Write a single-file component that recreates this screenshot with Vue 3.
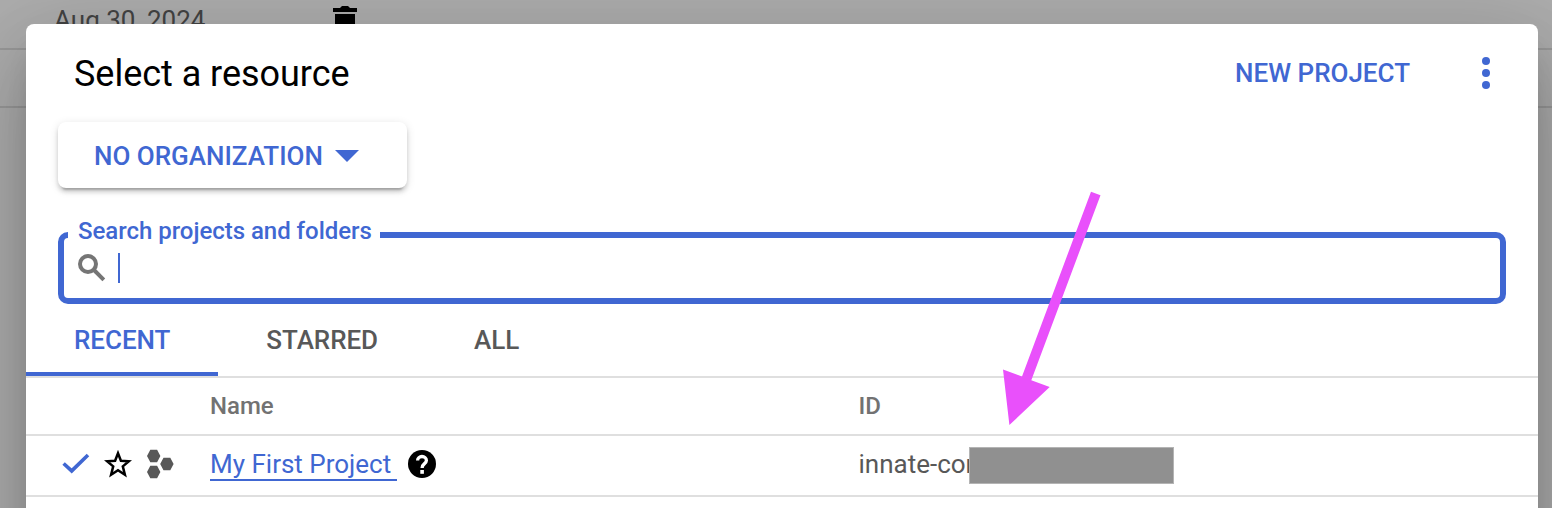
<script setup>
const tabs = [
  { label: 'RECENT', active: true },
  { label: 'STARRED', active: false },
  { label: 'ALL', active: false },
]
</script>

<template>
  <div class="page">
    <div class="backdrop">
      <div class="back-row first">
        <span class="date">Aug 30, 2024</span>
        <svg class="trash" width="24" height="36" viewBox="0 0 24 36">
          <path d="M9 0h6l2 2h7v4H0V2h7zM2 8h20v22a4 4 0 0 1-4 4H6a4 4 0 0 1-4-4z" />
        </svg>
      </div>
      <div class="back-row second"></div>
    </div>

    <section class="dialog">
      <header class="head">
        <h1>Select a resource</h1>
        <button class="new">NEW PROJECT</button>
        <svg class="dots" width="8" height="32" viewBox="0 0 8 32">
          <circle cx="4" cy="4" r="4" /><circle cx="4" cy="16" r="4" /><circle cx="4" cy="28" r="4" />
        </svg>
      </header>

      <button class="org">
        <span>NO ORGANIZATION</span>
        <svg width="24" height="12" viewBox="0 0 24 12"><path d="M0 0h24L12 12z" /></svg>
      </button>

      <div class="search">
        <label>Search projects and folders</label>
        <svg width="28" height="28" viewBox="0 0 28 28">
          <circle cx="10" cy="10" r="8" /><path d="M15.500 15.500L25.800 25.800" />
        </svg>
        <i class="caret"></i>
      </div>

      <nav class="tabs">
        <a v-for="t in tabs" :key="t.label" :class="['tab', { active: t.active }]">{{ t.label }}</a>
      </nav>

      <div class="row thead">
        <span class="name">Name</span>
        <span class="id">ID</span>
      </div>
      <div class="row item">
        <div class="icons">
          <svg class="check" width="28" height="22" viewBox="0 0 28 22"><path d="M1.600 10.500L9.700 17.900L26 2" /></svg>
          <svg class="star" width="28" height="28" viewBox="0 0 28 28">
            <path d="M14 3.200L16.900 10.700L25 11.200L18.800 16.400L20.900 24.800L14 20.300L7.100 24.800L9.200 16.400L3 11.200L11.100 10.700Z" />
          </svg>
          <svg class="hex" width="28" height="30" viewBox="0 0 28 30">
            <path d="M3.300.8h6.800l3.300 6.200-3.300 6.200H3.300L0 7zM16.500 8.800h6.800l3.300 6.200-3.300 6.200h-6.800l-3.300-6.200zM3.300 16.800h6.800l3.300 6.200-3.300 6.200H3.300L0 23z" />
          </svg>
        </div>
        <div class="name">
          <a class="link">My First Project</a>
          <svg class="help" width="28" height="28" viewBox="0 0 28 28">
            <circle cx="14" cy="14" r="14" />
            <path d="M9.600 10.500a4.400 4 0 0 1 8.800 0c0 3.300-4.300 3-4.300 7.400" />
            <rect x="12.300" y="20" width="3.600" height="3.800" />
          </svg>
        </div>
        <div class="id">innate-cor<i class="mask"></i></div>
      </div>
    </section>

    <svg class="arrow" width="60" height="240" viewBox="0 0 60 240">
      <path d="M91 1.700L100.500 5.200L31.300 190.300L49.700 197L9.400 235L3 179.500L22 186.500Z" />
    </svg>
  </div>
</template>

<style>
body { margin: 0; overflow: hidden; }
</style>

<style scoped>
* { box-sizing: border-box; }
.page {
  position: relative;
  height: 508px;
  overflow: hidden;
  padding: 24px 14px 0 26px;
  background: #adadad;
  font-family: Roboto, "Liberation Sans", sans-serif;
}
.backdrop { position: absolute; inset: 0; }
.back-row { border-bottom: 2px solid #999; }
.first { display: flex; height: 50px; padding-left: 54px; }
.second { height: 58px; }
.date { width: 279px; margin-top: 4px; font-size: 26px; line-height: 32px; color: #434343; }
.trash { margin-top: 6px; }
.dialog {
  position: relative;
  display: flex;
  flex-direction: column;
  width: 1512px;
  height: 640px;
  border-radius: 8px;
  background: #fff;
  box-shadow: 0 22px 30px -14px rgba(0, 0, 0, .2), 0 48px 76px 6px rgba(0, 0, 0, .14), 0 18px 92px 16px rgba(0, 0, 0, .12);
}
.head { display: flex; align-items: center; height: 98px; padding: 0 48px; }
h1 { margin: 0 auto 0 0; padding-top: 2px; font-size: 36px; line-height: 48px; font-weight: 400; letter-spacing: -.03px; color: #000; }
button { border: 0; padding: 0; background: none; font: 500 26px/32px Roboto, sans-serif; color: #4067d2; }
svg { flex: none; display: block; }
.dots { margin-left: 72px; fill: #4067d2; }
.org {
  display: flex;
  align-items: center;
  gap: 12px;
  width: 349px;
  height: 66px;
  margin-left: 32px;
  padding: 2px 0 0 36px;
  border-radius: 8px;
  background: #fff;
  box-shadow: 0 6px 2px -4px rgba(0, 0, 0, .2), 0 4px 4px rgba(0, 0, 0, .14), 0 2px 10px rgba(0, 0, 0, .12);
}
.org svg { fill: #4067d2; }
.search {
  position: relative;
  display: flex;
  align-items: center;
  height: 72px;
  margin: 44px 32px 0;
  padding-left: 14px;
  border: 6px solid #4067d2;
  border-radius: 10px;
}
.search svg { fill: none; stroke: #757575; stroke-width: 4; }
.search label {
  position: absolute;
  left: 4px;
  top: -23px;
  width: 312px;
  padding-left: 10px;
  background: #fff;
  font-size: 24px;
  line-height: 32px;
  font-weight: 500;
  letter-spacing: -.03px;
  color: #4067d2;
  white-space: nowrap;
}
.caret { width: 2px; height: 30px; margin-left: 12px; background: #4067d2; }
.tabs { display: flex; height: 74px; border-bottom: 2px solid #dfdfdf; }
.tab { height: 72px; padding: 0 48px; font-size: 26px; font-weight: 500; line-height: 72px; letter-spacing: -.05px; color: #585858; }
.active { color: #4067d2; border-bottom: 4px solid #4067d2; }
.row { display: flex; align-items: center; border-bottom: 2px solid #dfdfdf; }
.thead { height: 58px; padding-left: 184px; font-size: 24px; font-weight: 500; color: #727272; }
.item { height: 61px; padding-bottom: 3px; font-size: 26px; color: #585858; }
.icons { display: flex; align-items: center; width: 184px; padding-left: 36px; }
.check { fill: none; stroke: #4067d2; stroke-width: 3.600; }
.star { margin-left: 14px; fill: none; stroke: #000; stroke-width: 2.500; stroke-miterlimit: 10; }
.hex { margin-left: 15px; fill: #585858; }
.name { display: flex; align-items: center; width: 648px; }
.link { width: 187px; height: 32px; margin-top: 1px; line-height: 31px; border-bottom: 2px solid #4067d2; color: #4067d2; white-space: nowrap; }
.help { margin-left: 11px; }
.help path { fill: none; stroke: #fff; stroke-width: 3.300; }
.help rect { fill: #fff; }
.id { position: relative; padding-left: .5px; white-space: nowrap; }
.mask { position: absolute; left: 111px; top: -2px; width: 205px; height: 37px; background: #909090; border: 1px solid #b4b4b4; }
.arrow { position: absolute; left: 1000px; top: 190px; overflow: visible; fill: #e950fb; }
</style>
